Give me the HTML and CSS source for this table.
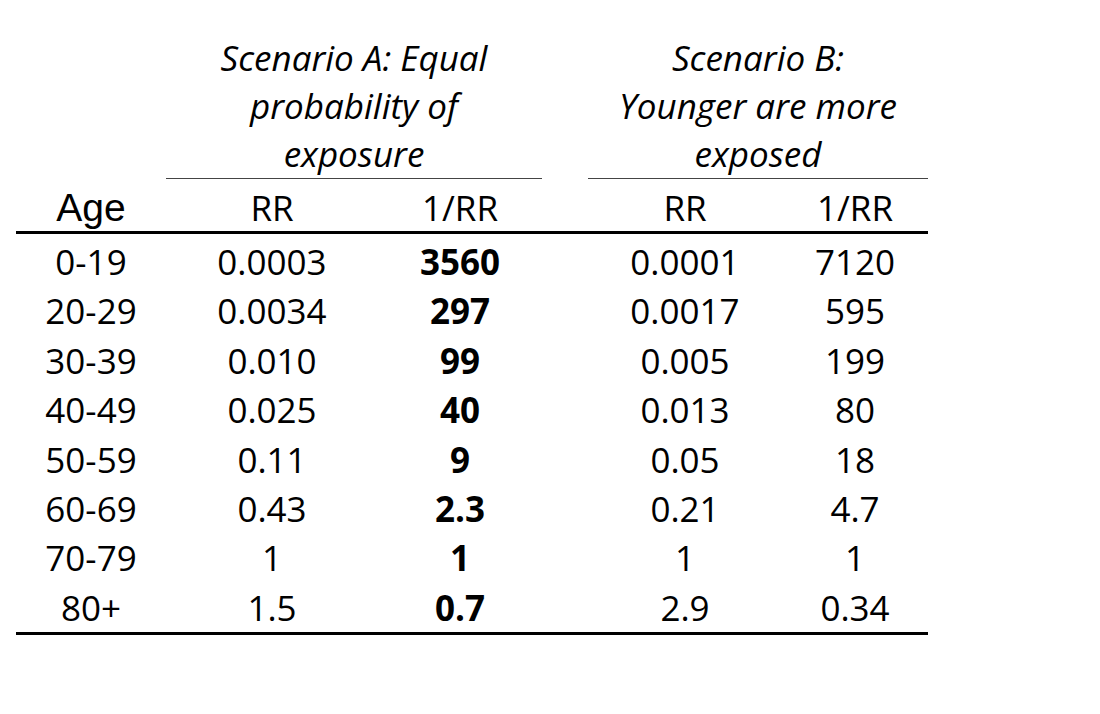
FILE: index.html
```html
<!DOCTYPE html>
<html>
<head>
<meta charset="utf-8">
<link rel="stylesheet" href="styles.css">
</head>
<body>
<table class="rr-table">
  <colgroup>
    <col class="c-age"><col class="c-arr"><col class="c-ainv"><col class="c-gap"><col class="c-brr"><col class="c-binv">
  </colgroup>
  <thead>
    <tr class="group-row">
      <th></th>
      <th colspan="2" class="group">Scenario A: Equal<br>probability of<br>exposure</th>
      <th></th>
      <th colspan="2" class="group">Scenario B:<br>Younger are more<br>exposed</th>
    </tr>
    <tr class="col-row">
      <th class="age-head">Age</th>
      <th>RR</th>
      <th>1/RR</th>
      <th></th>
      <th>RR</th>
      <th>1/RR</th>
    </tr>
  </thead>
  <tbody>
    <tr><td>0-19</td><td>0.0003</td><td class="b">3560</td><td></td><td>0.0001</td><td>7120</td></tr>
    <tr><td>20-29</td><td>0.0034</td><td class="b">297</td><td></td><td>0.0017</td><td>595</td></tr>
    <tr><td>30-39</td><td>0.010</td><td class="b">99</td><td></td><td>0.005</td><td>199</td></tr>
    <tr><td>40-49</td><td>0.025</td><td class="b">40</td><td></td><td>0.013</td><td>80</td></tr>
    <tr><td>50-59</td><td>0.11</td><td class="b">9</td><td></td><td>0.05</td><td>18</td></tr>
    <tr><td>60-69</td><td>0.43</td><td class="b">2.3</td><td></td><td>0.21</td><td>4.7</td></tr>
    <tr><td>70-79</td><td>1</td><td class="b">1</td><td></td><td>1</td><td>1</td></tr>
    <tr><td>80+</td><td>1.5</td><td class="b">0.7</td><td></td><td>2.9</td><td>0.34</td></tr>
  </tbody>
</table>
</body>
</html>
```

FILE: styles.css
```css
html, body {
  margin: 0;
  padding: 0;
  background: #fff;
}

body {
  padding: 34px 0 0 16px;
  font-family: "Open Sans", "Noto Sans", sans-serif;
  color: #000;
}

.rr-table {
  border-collapse: collapse;
  table-layout: fixed;
  width: 912px;
  font-size: 35px;
}

.c-age { width: 150px; }
.c-arr { width: 212px; }
.c-ainv { width: 164px; }
.c-gap { width: 46px; }
.c-brr { width: 194px; }
.c-binv { width: 146px; }

.rr-table th,
.rr-table td {
  padding: 0;
  text-align: center;
  font-weight: normal;
  white-space: nowrap;
}

.group-row th {
  vertical-align: bottom;
}

.rr-table .group {
  font-style: italic;
  line-height: 48px;
  padding-bottom: 0;
  border-bottom: 1.5px solid #444;
}

.col-row th {
  height: 52px;
  line-height: 47px;
  border-bottom: 3px solid #000;
  vertical-align: bottom;
}

.rr-table .age-head {
  font-family: "Liberation Sans", Arial, sans-serif;
  font-size: 39px;
}

.rr-table tbody td {
  height: 49.4px;
  line-height: 49.4px;
}

.rr-table tbody tr:first-child td {
  padding-top: 3px;
}

.rr-table tbody tr:last-child td {
  border-bottom: 3px solid #000;
}

.rr-table td.b {
  font-weight: bold;
}
```
